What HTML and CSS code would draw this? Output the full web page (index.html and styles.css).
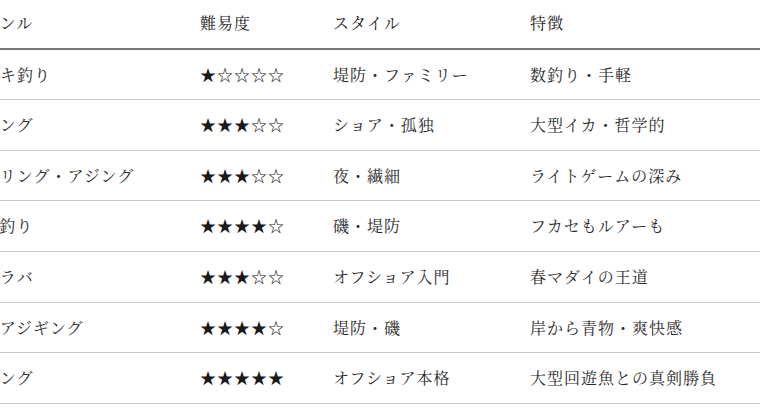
FILE: index.html
```html
<!DOCTYPE html>
<html lang="ja">
<head>
<meta charset="utf-8">
<title>釣りジャンル比較</title>
<link rel="stylesheet" href="styles.css">
</head>
<body>
<div class="viewport">
  <table class="fish-table">
    <colgroup>
      <col class="c-genre">
      <col class="c-level">
      <col class="c-style">
      <col class="c-feature">
    </colgroup>
    <thead>
      <tr><th>ジャンル</th><th>難易度</th><th>スタイル</th><th>特徴</th></tr>
    </thead>
    <tbody>
      <tr><td>サビキ釣り</td><td class="stars">★☆☆☆☆</td><td>堤防・ファミリー</td><td>数釣り・手軽</td></tr>
      <tr><td>エギング</td><td class="stars">★★★☆☆</td><td>ショア・孤独</td><td>大型イカ・哲学的</td></tr>
      <tr><td>メバリング・アジング</td><td class="stars">★★★☆☆</td><td>夜・繊細</td><td>ライトゲームの深み</td></tr>
      <tr><td>チヌ釣り</td><td class="stars">★★★★☆</td><td>磯・堤防</td><td>フカセもルアーも</td></tr>
      <tr><td>タイラバ</td><td class="stars">★★★☆☆</td><td>オフショア入門</td><td>春マダイの王道</td></tr>
      <tr><td>ショアジギング</td><td class="stars">★★★★☆</td><td>堤防・磯</td><td>岸から青物・爽快感</td></tr>
      <tr><td>ジギング</td><td class="stars">★★★★★</td><td>オフショア本格</td><td>大型回遊魚との真剣勝負</td></tr>
    </tbody>
  </table>
</div>
</body>
</html>
```

FILE: styles.css
```css
html, body {
  margin: 0;
  padding: 0;
  background: #fff;
  overflow: hidden;
}
.viewport {
  width: 760px;
  height: 415px;
  overflow: hidden;
}
.fish-table {
  margin-left: -46px;
  width: 880px;
  table-layout: fixed;
  border-collapse: collapse;
  font-family: "Noto Serif CJK JP", "Noto Sans CJK JP", serif;
  font-size: 16px;
  letter-spacing: 1px;
  color: #2a2a2a;
}
.c-genre { width: 234px; }
.c-level { width: 133px; }
.c-style { width: 197px; }
.c-feature { width: 316px; }
.fish-table th {
  text-align: left;
  font-weight: normal;
  color: #1a1a1a;
  padding: 10px 12px 12px;
  line-height: 25.6px;
  border-bottom: 2px solid #777;
}
.fish-table td {
  padding: 12px 12px;
  line-height: 25.6px;
  border-bottom: 1px solid #c8c8c8;
  white-space: nowrap;
}
.stars {
  color: #1a1a1a;
}
```
